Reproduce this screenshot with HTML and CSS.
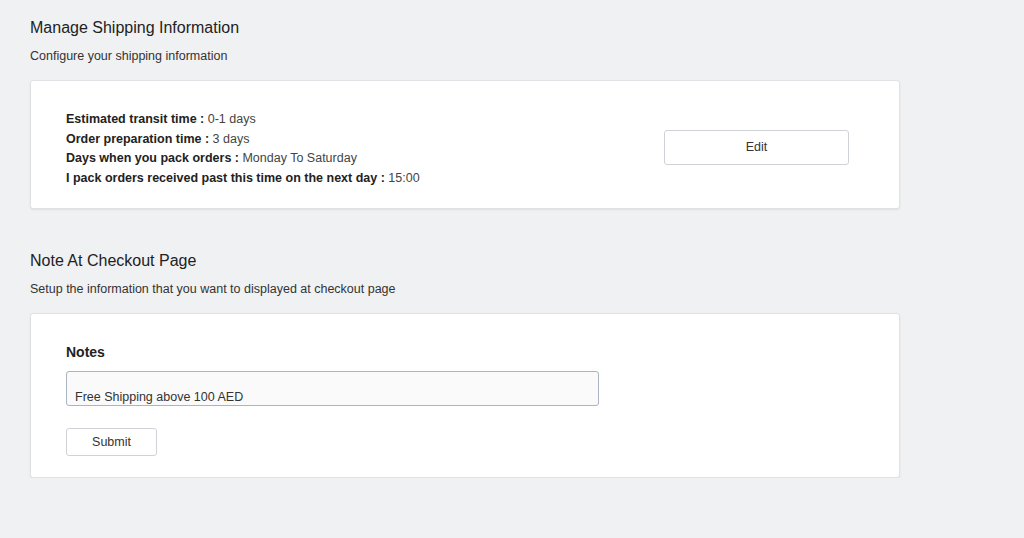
FILE: index.html
```html
<!DOCTYPE html>
<html>
<head>
<meta charset="utf-8">
<link rel="stylesheet" href="styles.css">
</head>
<body>
<div class="page">
  <section class="section">
    <h2 class="title">Manage Shipping Information</h2>
    <p class="subtitle">Configure your shipping information</p>
    <div class="card card-info">
      <div class="info">
        <div class="row"><b>Estimated transit time :</b> 0-1 days</div>
        <div class="row"><b>Order preparation time :</b> 3 days</div>
        <div class="row"><b>Days when you pack orders :</b> Monday To Saturday</div>
        <div class="row"><b>I pack orders received past this time on the next day :</b> 15:00</div>
      </div>
      <button class="btn btn-edit">Edit</button>
    </div>
  </section>
  <section class="section section-2">
    <h2 class="title">Note At Checkout Page</h2>
    <p class="subtitle">Setup the information that you want to displayed at checkout page</p>
    <div class="card card-notes">
      <div class="notes-label">Notes</div>
      <div class="notes-box">Free Shipping above 100 AED</div>
      <button class="btn btn-submit">Submit</button>
    </div>
  </section>
</div>
</body>
</html>
```

FILE: styles.css
```css
html, body {
  margin: 0;
  padding: 0;
  background: #f0f1f3;
  font-family: "Liberation Sans", Arial, sans-serif;
  color: #222;
}
.page {
  width: 870px;
  padding: 18px 0 0 30px;
}
.title {
  margin: 0;
  font-size: 16px;
  font-weight: normal;
  color: #222;
  line-height: 20px;
}
.subtitle {
  margin: 10px 0 0;
  font-size: 12.5px;
  color: #333;
  line-height: 16px;
}
.card {
  background: #fff;
  border: 1px solid #dfe1e5;
  border-radius: 3px;
  box-shadow: 0 1px 2px rgba(0,0,0,0.08);
  margin-top: 16px;
}
.card-info {
  display: flex;
  align-items: center;
  justify-content: space-between;
  padding: 29px 50px 20px 35px;
  height: 78px;
}
.info {
  font-size: 12.5px;
  color: #444;
}
.row {
  line-height: 19.5px;
}
.row b {
  color: #222;
}
.btn {
  background: #fff;
  border: 1px solid #cfd2d6;
  border-radius: 3px;
  font-family: "Liberation Sans", Arial, sans-serif;
  font-size: 12.5px;
  color: #333;
  padding: 0;
  cursor: pointer;
}
.btn-edit {
  width: 185px;
  height: 35px;
  margin-top: -4px;
}
.section-2 {
  margin-top: 42px;
}
.card-notes {
  padding: 29px 35px 21px;
}
.notes-label {
  font-size: 14px;
  font-weight: bold;
  color: #222;
  line-height: 18px;
}
.notes-box {
  margin-top: 10px;
  width: 533px;
  height: 35px;
  box-sizing: border-box;
  border: 1px solid #aab4c2;
  border-radius: 3px;
  background: #fafafa;
  font-size: 12.5px;
  color: #333;
  padding: 18px 8px 0;
  line-height: 15px;
}
.btn-submit {
  margin-top: 22px;
  width: 91px;
  height: 28px;
  display: block;
}
```
